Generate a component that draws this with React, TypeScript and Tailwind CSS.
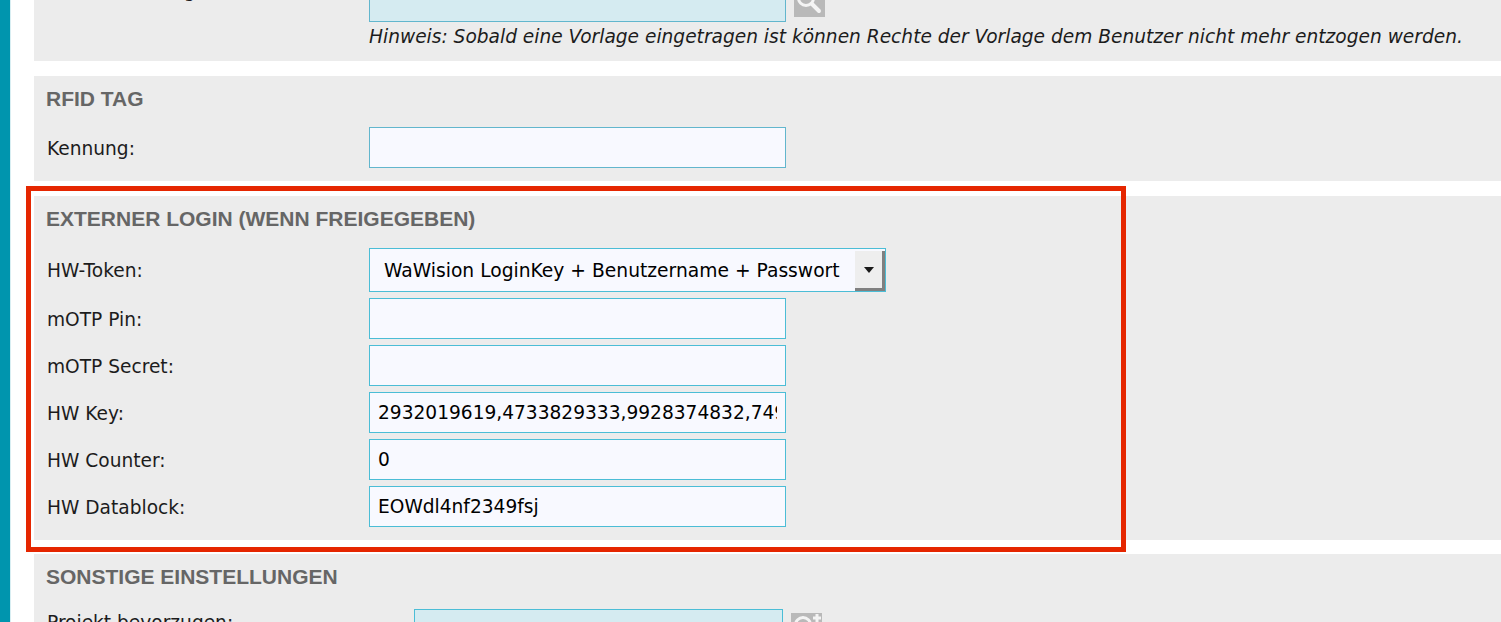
import React from 'react';

const body = '[font-family:"DejaVu_Sans",sans-serif]';

function Field({ value = '', active = false }: { value?: string; active?: boolean }) {
    return (
        <input
            readOnly
            value={value}
            className={`w-[417px] h-[41px] border bg-[#f8f9ff] px-2 text-[18.6px] text-black outline-none font-['DejaVu_Sans',sans-serif] ${active ? 'border-[#4bbdd6]' : 'border-[#62b6cd]'}`}
        />
    );
}

function Row({ label, children }: { label: string; children: React.ReactNode }) {
    return (
        <div className="flex items-center">
            <label className="w-[323px] pl-[1px] pt-[2px] text-[18.6px] text-[#1c1c1c]">{label}</label>
            {children}
        </div>
    );
}

function Heading({ children }: { children: React.ReactNode }) {
    return <h2 className="font-['Liberation_Sans',sans-serif] text-[21px] leading-[24px] font-bold text-[#666666]">{children}</h2>;
}

function SearchIcon({ plus = false }: { plus?: boolean }) {
    return (
        <span className="flex h-[31px] w-[31px] items-center justify-center bg-[#b9b9b9]">
            <svg viewBox="0 0 31 31" className="h-[31px] w-[31px]" fill="none" stroke="#f4f4f4" strokeWidth="3">
                <circle cx="12" cy="12" r="7.5" />
                <path d="M18 18l7 7" strokeWidth="4" strokeLinecap="round" />
                {plus && <path d="M26 1v9M22 5h8" strokeWidth="3" />}
            </svg>
        </span>
    );
}

export default function App() {
    return (
        <div className={`relative flex h-[622px] overflow-hidden bg-white ${body}`}>
            {/* sidebar strip */}
            <div className="w-[10px] shrink-0 bg-[#0095ae]" />
            <div className="w-[1px] shrink-0 bg-[#d8eef2]" />

            <main className="flex min-w-0 flex-1 flex-col gap-[15px] pl-[23px]">
                {/* Vorlage panel, cut off by the window */}
                <section className="relative h-[61px] shrink-0 overflow-hidden bg-[#ececec] pl-[12px]">
                    <div className="-mt-[19px] flex items-start">
                        <label className="-mt-[4px] w-[323px] pl-[1px] text-[18.6px] text-[#1c1c1c]">Benutzer Vorlage:</label>
                        <div className="h-[41px] w-[417px] shrink-0 border border-[#62b6cd] bg-[#d5ebf1]" />
                        <div className="ml-[8px] mt-[5px]">
                            <SearchIcon />
                        </div>
                    </div>
                    <p className="mt-[2px] pl-[323px] text-[18.6px] leading-[26px] text-[#1c1c1c] italic whitespace-nowrap">
                        Hinweis: Sobald eine Vorlage eingetragen ist können Rechte der Vorlage dem Benutzer nicht mehr entzogen werden.
                    </p>
                </section>

                {/* RFID */}
                <section className="h-[105px] shrink-0 bg-[#ececec] pt-[11px] pl-[12px]">
                    <Heading>RFID TAG</Heading>
                    <div className="mt-[16px]">
                        <Row label="Kennung:"><Field /></Row>
                    </div>
                </section>

                {/* Externer Login */}
                <section className="h-[344px] shrink-0 bg-[#ececec] pt-[11px] pl-[12px]">
                    <Heading>EXTERNER LOGIN (WENN FREIGEGEBEN)</Heading>
                    <div className="mt-[17px] flex flex-col gap-[6px]">
                        <Row label="HW-Token:">
                            <div className="flex h-[44px] w-[517px] items-start justify-between border border-[#4bbdd6] bg-[#f8f9ff] text-black">
                                <span className="pl-[14px] pt-[10px] text-[18.7px] leading-[24px]">WaWision LoginKey + Benutzername + Passwort</span>
                                <span className="mt-[2px] flex h-[40px] w-[30px] items-center justify-center border-r-[3px] border-b-[3px] border-[#808080] bg-[#eeeeee]">
                                    <svg viewBox="0 0 10 6" className="h-[6px] w-[10px]"><path d="M0 0h10L5 6z" fill="#1a1a1a" /></svg>
                                </span>
                            </div>
                        </Row>
                        <Row label="mOTP Pin:"><Field active /></Row>
                        <Row label="mOTP Secret:"><Field active /></Row>
                        <Row label="HW Key:"><Field active value="2932019619,4733829333,9928374832,7490028371" /></Row>
                        <Row label="HW Counter:"><Field active value="0" /></Row>
                        <Row label="HW Datablock:"><Field active value="EOWdl4nf2349fsj" /></Row>
                    </div>
                </section>

                {/* Sonstige */}
                <section className="flex-1 bg-[#ececec] pt-[11px] pl-[12px] -mt-[1px]">
                    <Heading>SONSTIGE EINSTELLUNGEN</Heading>
                    <div className="mt-[20px] flex items-start">
                        <label className="w-[368px] pl-[1px] text-[18.6px] text-[#1c1c1c]">Projekt bevorzugen:</label>
                        <div className="h-[41px] w-[369px] shrink-0 border border-[#4bbdd6] bg-[#d5ebf1]" />
                        <div className="ml-[8px] mt-[4px]">
                            <SearchIcon plus />
                        </div>
                    </div>
                </section>
            </main>

            {/* red annotation box drawn over the screenshot */}
            <div className="absolute top-[186px] left-[26px] h-[366px] w-[1100px] border-[5px] border-[#e52600]" />
        </div>
    );
}
